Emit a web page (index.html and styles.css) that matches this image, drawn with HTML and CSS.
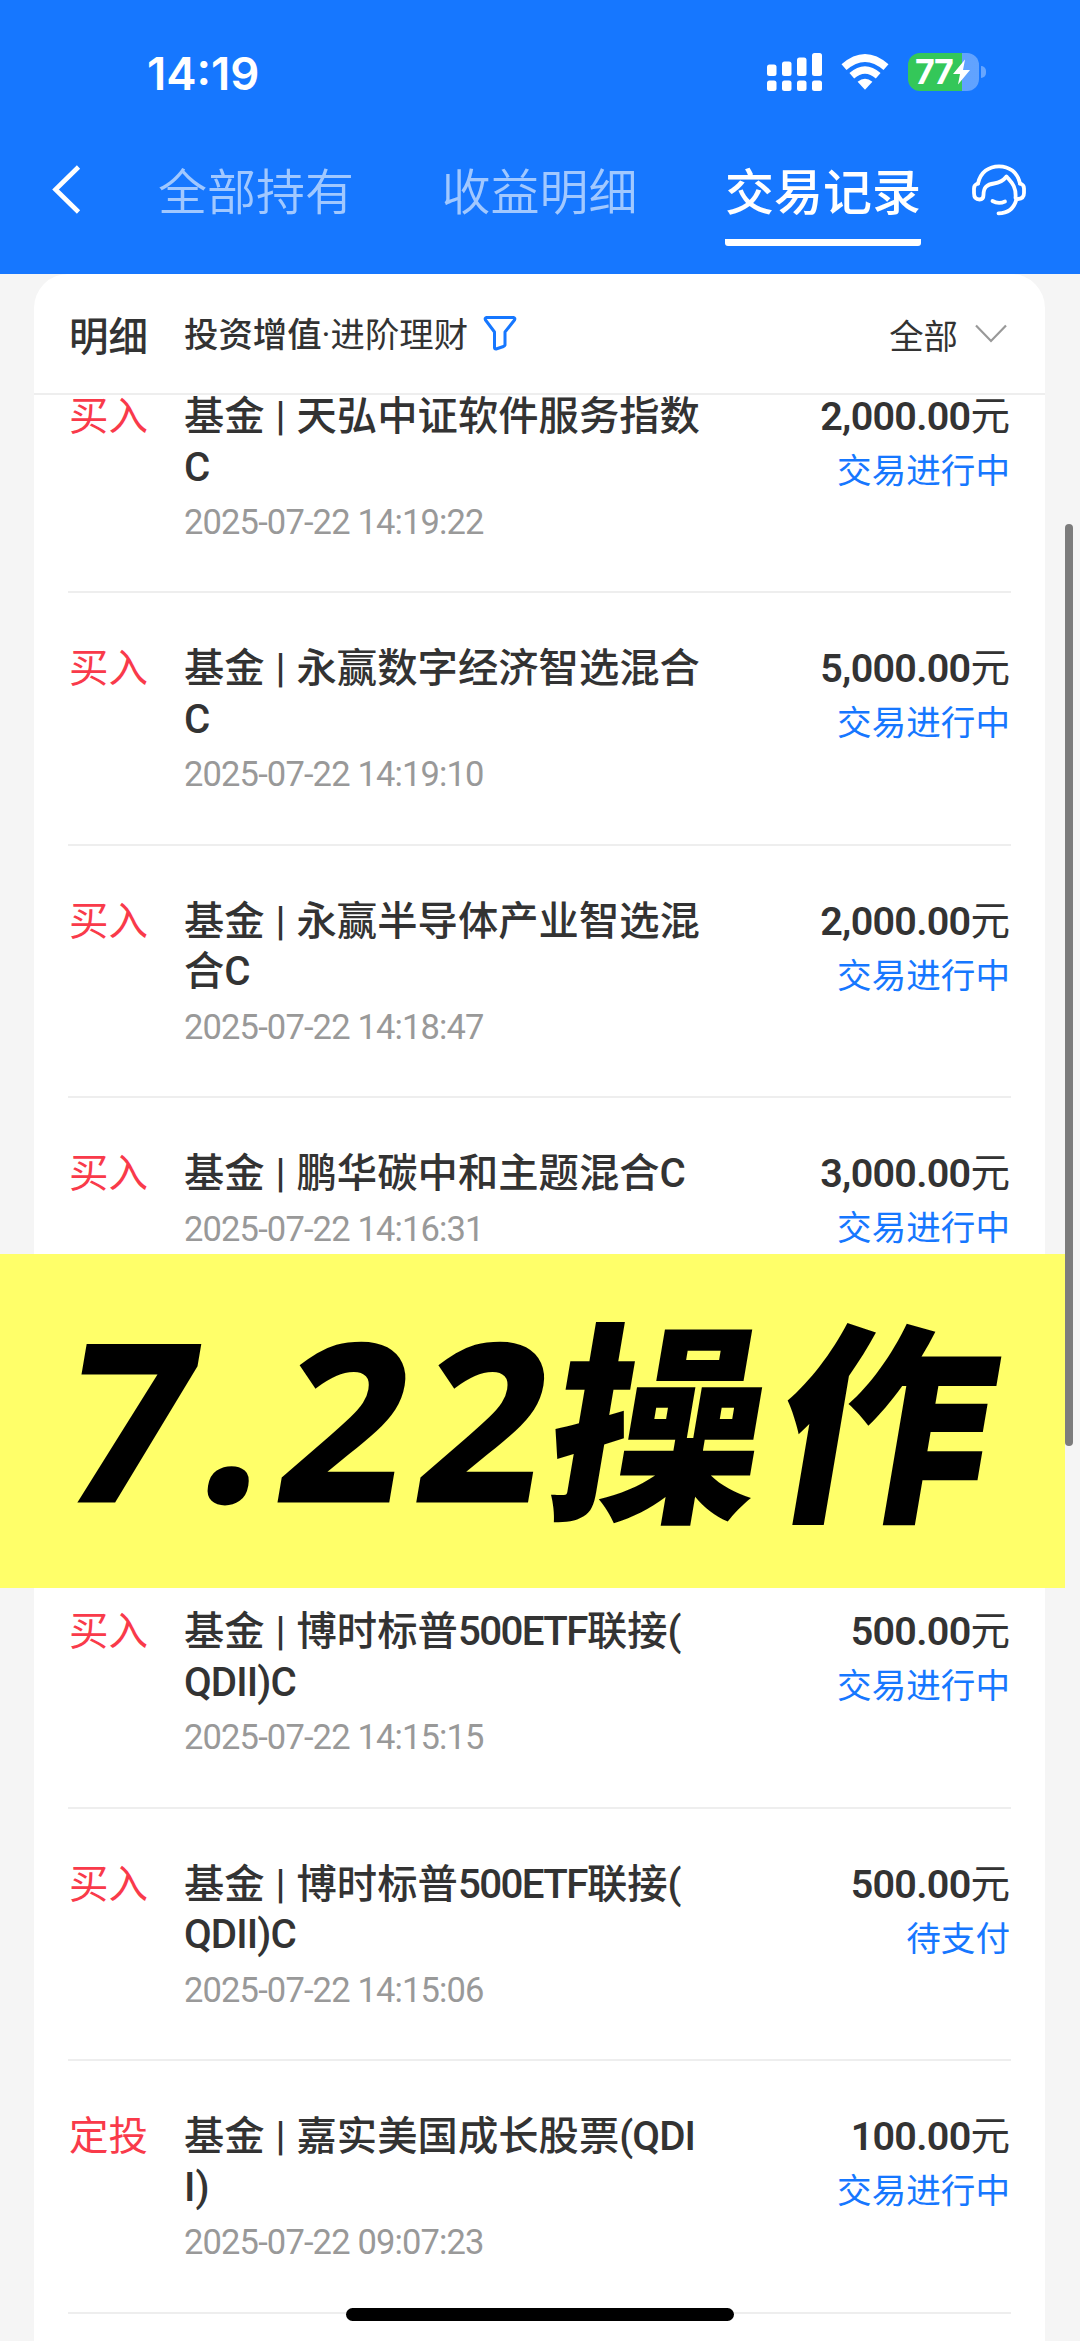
FILE: index.html
```html
<!DOCTYPE html>
<html lang="zh-CN">
<head>
<meta charset="utf-8">
<title>交易记录</title>
<link rel="stylesheet" href="styles.css">
</head>
<body>
<div class="screen">
  <header class="header">
    <div class="status-bar">
      <span class="clock">14:19</span>
      <div class="status-icons">
        <svg class="signal" width="56" height="38" viewBox="0 0 56 38" fill="#fff">
          <rect x="0" y="11.500" width="9.500" height="11.500" rx="2.500"/><rect x="15" y="8.500" width="9.500" height="14.500" rx="2.500"/><rect x="30" y="4.500" width="9.500" height="18.500" rx="2.500"/><rect x="45" y="0" width="10" height="23" rx="2.500"/>
          <rect x="0" y="27.500" width="9.500" height="10.500" rx="2.500"/><rect x="15" y="27.500" width="9.500" height="10.500" rx="2.500"/><rect x="30" y="27.500" width="9.500" height="10.500" rx="2.500"/><rect x="45" y="27.500" width="10" height="10.500" rx="2.500"/>
        </svg>
        <svg class="wifi" width="48" height="38" viewBox="0 0 48 38" fill="none" stroke="#fff">
          <path d="M3 14.200Q24 -4.200 45 14.200" stroke-width="7.600"/>
          <path d="M10.800 22.800Q24 11.200 37.200 22.800" stroke-width="7.200"/>
          <path d="M24 36.800L16.600 28.800Q24 22.800 31.400 28.800Z" fill="#fff" stroke="none"/>
        </svg>
        <div class="battery">
          <span class="battery-text">77</span>
          <svg width="17" height="26" viewBox="0 0 17 26" fill="#fff"><path d="M12 0.500L0 15H7L5 25.500L17 11H10Z"/></svg>
        </div>
        <span class="battery-cap"></span>
      </div>
    </div>
    <nav class="tabs">
      <svg class="back" width="32" height="50" viewBox="0 0 32 50" fill="none" stroke="#fff" stroke-width="4.600"><path d="M28.500 2L5.500 24.500L28.500 47"/></svg>
      <span class="tab">全部持有</span>
      <span class="tab">收益明细</span>
      <span class="tab active">交易记录</span>
      <svg class="service" width="54" height="52" viewBox="0 0 54 52" fill="none" stroke="#fff" stroke-width="3.800" stroke-linecap="round" stroke-linejoin="round">
        <path d="M6 19.500C8.500 8 17 2.300 27 2.300S45.500 8 48 19.500"/>
        <path d="M6 19.500Q2 20.500 2 24.500V29Q2 35.500 7.500 35.500Q11.500 35.500 11.500 31C11.500 23 15 20.500 22 19.500C28 18.800 31 17 34.500 12.500C39 18 44.500 22 43.500 34"/>
        <path d="M48 19.500Q52 20.500 52 24.500V29Q52 34.500 46 35M44.500 35C42 45 36 49.300 26.500 49.300"/>
        <path d="M20.500 37Q26.500 40.500 33 37.500"/>
      </svg>
    </nav>
  </header>
  <main class="card">
    <div class="filter-bar">
      <span class="heading">明细</span>
      <span class="category"><b>投资增值</b><i class="dot">·</i>进阶理财</span>
      <svg class="funnel" width="34" height="36" viewBox="0 0 34 36" fill="none" stroke="#1677ff" stroke-width="3" stroke-linejoin="round"><path d="M3.500 2.500H30.500Q32.500 3 31.500 5L22 17V30Q21.500 31 20.500 31.500L13 34Q11.500 34 11.500 32.500V17L2.500 5Q1.500 3 3.500 2.500Z"/></svg>
      <span class="all">全部</span>
      <svg class="arrow" width="32" height="20" viewBox="0 0 32 20" fill="none" stroke="#999" stroke-width="2.200"><path d="M1 1.500L16 17L31 1.500"/></svg>
    </div>
    <ul class="records">
      <li class="record first"><span class="type">买入</span><div class="detail"><p class="name">基金 | 天弘中证软件服务指数<br>C</p><time>2025-07-22 14:19:22</time></div><div class="result"><p class="amount">2,000.00<i>元</i></p><p class="state">交易进行中</p></div></li>
      <li class="record"><span class="type">买入</span><div class="detail"><p class="name">基金 | 永赢数字经济智选混合<br>C</p><time>2025-07-22 14:19:10</time></div><div class="result"><p class="amount">5,000.00<i>元</i></p><p class="state">交易进行中</p></div></li>
      <li class="record"><span class="type">买入</span><div class="detail"><p class="name">基金 | 永赢半导体产业智选混<br>合C</p><time>2025-07-22 14:18:47</time></div><div class="result"><p class="amount">2,000.00<i>元</i></p><p class="state">交易进行中</p></div></li>
      <li class="record tall"><span class="type">买入</span><div class="detail"><p class="name">基金 | 鹏华碳中和主题混合C</p><time>2025-07-22 14:16:31</time></div><div class="result"><p class="amount">3,000.00<i>元</i></p><p class="state">交易进行中</p></div></li>
      <li class="record"><span class="type">买入</span><div class="detail"><p class="name">基金 | 博时标普<span class="latin">500ETF</span>联接(<br><span class="latin wide">QDII)C</span></p><time>2025-07-22 14:15:15</time></div><div class="result"><p class="amount">500.00<i>元</i></p><p class="state">交易进行中</p></div></li>
      <li class="record"><span class="type">买入</span><div class="detail"><p class="name">基金 | 博时标普<span class="latin">500ETF</span>联接(<br><span class="latin wide">QDII)C</span></p><time>2025-07-22 14:15:06</time></div><div class="result"><p class="amount">500.00<i>元</i></p><p class="state">待支付</p></div></li>
      <li class="record"><span class="type">定投</span><div class="detail"><p class="name">基金 | 嘉实美国成长股票<span class="latin wide">(QDI</span><br>I)</p><time>2025-07-22 09:07:23</time></div><div class="result"><p class="amount">100.00<i>元</i></p><p class="state">交易进行中</p></div></li>
    </ul>
  </main>
  <div class="scrollbar"></div>
  <div class="banner"><div class="banner-text"><span class="digits">7.22</span><span class="hanzi">操作</span></div></div>
  <div class="home-indicator"></div>
</div>
</body>
</html>
```

FILE: styles.css
```css
* { box-sizing: border-box; margin: 0; padding: 0; }
body { background: #f5f5f5; font-family: Roboto, "Noto Sans CJK SC", sans-serif; color: #333; }
i { font-style: normal; }
svg { display: block; flex: none; }
.screen { position: relative; width: 1080px; height: 2341px; overflow: hidden; background: #f5f5f5; }

.header { height: 274px; background: #1677ff; color: #fff; }
.status-bar { display: flex; justify-content: space-between; height: 145px; padding: 53px 94px 0 147px; }
.clock { font: 600 45.500px/42px Inter, sans-serif; letter-spacing: 0; }
.status-icons { display: flex; height: 38px; }
.signal { margin-right: 18px; }
.wifi { margin-right: 19px; }
.battery { display: flex; align-items: center; gap: 1px; width: 71px; height: 38px; padding-left: 7px; border-radius: 12px; background: linear-gradient(90deg, #34c759 54px, rgba(255,255,255,.32) 54px); }
.battery-text { font: 700 34px/38px Inter, sans-serif; letter-spacing: -1.500px; }
.battery-cap { width: 5px; height: 12px; margin: 13px 0 0 2px; border-radius: 0 5px 5px 0; background: rgba(255,255,255,.35); }

.tabs { display: flex; height: 129px; padding-left: 50px; }
.back { margin: 20px 76px 0 0; }
.tab { width: 196px; margin-right: 87.500px; font: 350 49px/87px "Noto Sans CJK SC", sans-serif; color: rgba(255,255,255,.6); white-space: nowrap; }
.tab.active { height: 101px; margin-right: 51px; border-bottom: 7px solid #fff; border-radius: 0 0 3px 3px; font-weight: 500; color: #fff; }
.service { margin-top: 19px; }

.card { width: 1011px; height: 2067px; margin-left: 34px; border-radius: 34px 34px 0 0; background: #fff; }
.filter-bar { display: flex; align-items: center; height: 121px; padding: 0 38px 0 35px; border-bottom: 2px solid #eee; font: 400 34.400px/60px "Noto Sans CJK SC", sans-serif; }
.filter-bar b { font-weight: 500; }
.dot { font-family: Roboto, sans-serif; }
.heading { width: 115px; font-size: 39.500px; font-weight: 500; }
.funnel { margin: 0 auto 2px 15px; }
.arrow { margin-left: 17px; }

.records { list-style: none; padding: 0 34px; }
.record { display: flex; height: 252.600px; padding-top: 51px; border-bottom: 2px solid #eee; }
.record.first { height: 201px; padding-top: 0; margin-top: -3px; }
.record.tall { height: 458px; }
.type { width: 116px; padding-left: 1px; font: 400 39.500px/42px "Noto Sans CJK SC", sans-serif; color: #f93a4a; }
.detail { flex: 1; }
.name { font-size: 40.300px; line-height: 50.500px; font-weight: 500; letter-spacing: .05px; word-spacing: .8px; white-space: nowrap; }
.latin { letter-spacing: -1.600px; }
.latin.wide { letter-spacing: -.900px; }
time { display: block; font-size: 34.500px; line-height: 58px; letter-spacing: -0.850px; color: #999; }
.result { padding-right: 1px; text-align: right; }
.amount { font-size: 39.500px; line-height: 50px; font-weight: 600; letter-spacing: -.7px; }
.amount i { font-weight: 400; letter-spacing: 0; }
.state { font: 400 34.600px/53px "Noto Sans CJK SC", sans-serif; color: #1677ff; }

.scrollbar { position: absolute; left: 1065px; top: 524px; width: 7.500px; height: 922px; border-radius: 4px; background: #7c7c7c; }
.banner { position: absolute; left: 0; top: 1254px; width: 1065px; height: 334px; background: #ffff69; color: #000; }
.banner-text { display: flex; padding-left: 70px; transform: skewX(-9.600deg); font: 900 214px/316px "Noto Sans CJK SC", sans-serif; white-space: nowrap; }
.digits { width: 484px; font: 700 218px/326px "Open Sans", sans-serif; letter-spacing: 14px; -webkit-text-stroke: 3px #000; }
.hanzi { letter-spacing: 14px; }
.home-indicator { position: absolute; left: 346px; top: 2308px; width: 388px; height: 13px; border-radius: 7px; background: #000; }
```
